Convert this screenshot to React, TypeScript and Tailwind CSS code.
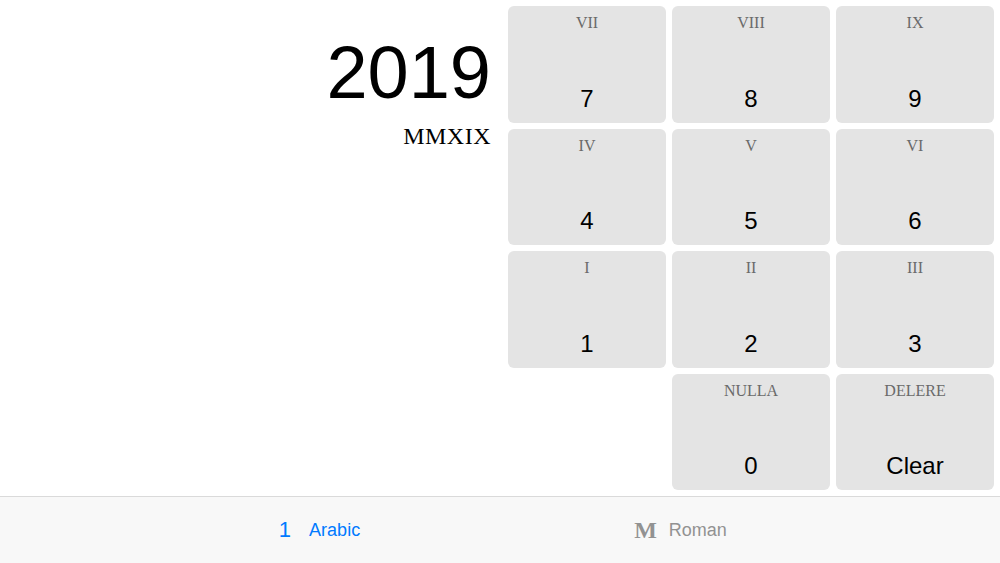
import React from "react";

const keys: { roman: string; label: string }[][] = [
  [
    { roman: "VII", label: "7" },
    { roman: "VIII", label: "8" },
    { roman: "IX", label: "9" },
  ],
  [
    { roman: "IV", label: "4" },
    { roman: "V", label: "5" },
    { roman: "VI", label: "6" },
  ],
  [
    { roman: "I", label: "1" },
    { roman: "II", label: "2" },
    { roman: "III", label: "3" },
  ],
];

function Key({ roman, label }: { roman: string; label: string }) {
  return (
    <div className="flex flex-col items-center justify-between rounded-[6px] bg-[#e4e4e4] pt-[7px] pb-[10px]">
      <div className="text-[16px] leading-[20px] text-[#6a6a6a] [font-family:'Liberation_Serif',serif]">{roman}</div>
      <div className="text-[24px] leading-[28px] text-black [font-family:'Liberation_Sans',sans-serif]">{label}</div>
    </div>
  );
}

export default function App() {
  return (
    <div className="flex h-[563px] w-[1000px] flex-col bg-white">
      <div className="flex h-[496px]">
        <div className="flex w-[502px] flex-col items-end pr-[11px] pt-[30px]">
          <div className="text-[74px] leading-[86px] text-black [font-family:'Liberation_Sans',sans-serif]">2019</div>
          <div className="mt-[6px] text-[24px] leading-[28px] tracking-[0.5px] text-black [font-family:'Liberation_Serif',serif]">MMXIX</div>
        </div>
        <div className="grid flex-1 grid-cols-3 grid-rows-4 gap-[6px] p-[6px]">
          {keys.flat().map((k) => (
            <Key key={k.label} roman={k.roman} label={k.label} />
          ))}
          <div />
          <Key roman="NULLA" label="0" />
          <Key roman="DELERE" label="Clear" />
        </div>
      </div>
      <div className="flex flex-1 justify-center border-t border-[#dadada] bg-[#f8f8f8]">
        <div className="flex w-[361px] items-center justify-center gap-[18px]">
          <span className="text-[22px] leading-none text-[#007aff] [font-family:'Liberation_Sans',sans-serif]">1</span>
          <span className="text-[18px] text-[#007aff] [font-family:'Liberation_Sans',sans-serif]">Arabic</span>
        </div>
        <div className="flex w-[361px] items-center justify-center gap-[12px]">
          <span className="text-[24px] leading-none font-bold text-[#929292] [font-family:'Liberation_Serif',serif]">M</span>
          <span className="text-[18px] text-[#929292] [font-family:'Liberation_Sans',sans-serif]">Roman</span>
        </div>
      </div>
    </div>
  );
}
